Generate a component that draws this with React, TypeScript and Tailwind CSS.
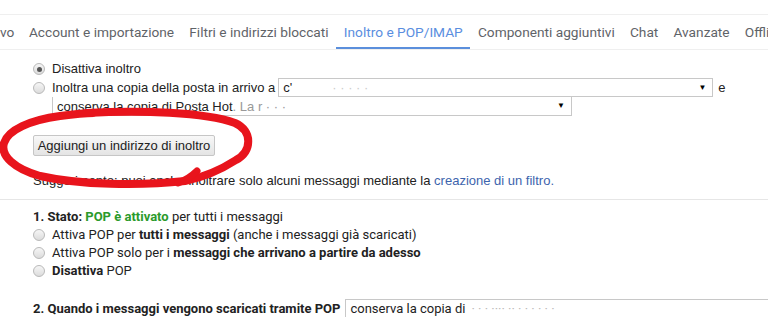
import React from 'react';

const tabs = [
  'vo',
  'Account e importazione',
  'Filtri e indirizzi bloccati',
  'Inoltro e POP/IMAP',
  'Componenti aggiuntivi',
  'Chat',
  'Avanzate',
  'Offline',
];

function Radio({ checked = false }: { checked?: boolean }) {
  return (
    <span className="mr-[7px] flex h-[12px] w-[12px] shrink-0 items-center justify-center rounded-full border border-[#b9b9b9] bg-gradient-to-b from-[#f6f6f6] to-[#dcdcdc]">
      {checked && <span className="h-[5px] w-[5px] rounded-full bg-[#555]" />}
    </span>
  );
}

function Select({ className, children }: { className: string; children?: React.ReactNode }) {
  return (
    <div className={`flex h-[19px] items-center border border-[#c8c8c8] bg-white pl-[4px] pr-[6px] ${className}`}>
      <span className="flex-1 overflow-hidden whitespace-nowrap text-[13px] leading-none text-[#222]">{children}</span>
      <span className="text-[8px] leading-none text-black">▼</span>
    </div>
  );
}

export default function App() {
  return (
    <div className="relative h-[317px] w-[768px] overflow-hidden bg-white font-['Liberation_Sans',Arial,sans-serif] text-[13px] text-[#222]">
      <div className="h-[14px]" />
      {/* tab bar */}
      <div className="flex h-[36px] items-stretch overflow-hidden whitespace-nowrap border-y border-[#efefef] font-['Roboto',sans-serif] text-[13.7px] text-[#5f6368]">
        {tabs.map((t, i) => (
          <div
            key={t}
            className={`flex shrink-0 items-center ${i === 0 ? 'pr-[7px]' : 'px-[7.6px]'} ${
              t === 'Inoltro e POP/IMAP' ? 'border-b-2 border-[#5b8fdc] pt-[2px] text-[#5a8ee0]' : ''
            }`}
          >
            {t}
          </div>
        ))}
      </div>

      {/* forwarding */}
      <div className="pl-[33px]">
        <div className="mt-[10px] flex h-[18px] items-center">
          <Radio checked />
          <span>Disattiva inoltro</span>
        </div>
        <div className="flex h-[19px] items-center">
          <Radio />
          <span className="mr-[3px]">Inoltra una copia della posta in arrivo a</span>
          <Select className="w-[435px]">
            c'<span className="ml-[40px] text-[#ccc]">· · ·  ·   ·</span>
          </Select>
          <span className="ml-[5px]">e</span>
        </div>
        <div className="pl-[19px]">
          <Select className="w-[520px] border-t-0">
            conserva la copia di Posta Hot<span className="text-[#999]">. La r · · ·</span>
          </Select>
        </div>
        <button className="mt-[19px] flex h-[21px] w-[182px] items-center justify-center rounded-[2px] border border-[#c6c6c6] bg-gradient-to-b from-[#f8f8f8] to-[#e4e4e4] text-[13px] text-[#222]">
          Aggiungi un indirizzo di inoltro
        </button>
        <div className="mt-[17px] h-[16px] leading-[16px]">
          Suggerimento: puoi anche inoltrare solo alcuni messaggi mediante la{' '}
          <span className="text-[#3d64ad]">creazione di un filtro.</span>
        </div>
      </div>

      <div className="mt-[10px] border-t border-[#e6e6e6]" />

      {/* POP */}
      <div className="pl-[33px] pt-[8px] font-['Roboto',sans-serif]">
        <div className="flex h-[18px] items-center">
          <b>1. Stato:&nbsp;</b>
          <b className="text-[#2b9a2b]">POP è attivato</b>
          <span>&nbsp;per tutti i messaggi</span>
        </div>
        <div className="flex h-[18px] items-center">
          <Radio />
          <span>
            Attiva POP per <b>tutti i messaggi</b> (anche i messaggi già scaricati)
          </span>
        </div>
        <div className="flex h-[18px] items-center">
          <Radio />
          <span>
            Attiva POP solo per i <b>messaggi che arrivano a partire da adesso</b>
          </span>
        </div>
        <div className="flex h-[18px] items-center">
          <Radio />
          <span>
            <b>Disattiva</b> POP
          </span>
        </div>
        <div className="mt-[19px] flex h-[20px] items-center">
          <b className="mr-[5px]">2. Quando i messaggi vengono scaricati tramite POP</b>
          <div className="flex h-[20px] flex-1 items-center border border-r-0 border-[#c8c8c8] pl-[4px]">
            conserva la copia di<span className="ml-[6px] text-[#bbb]">·  · ·   ···· ·· ·       ·    · ·  ·   ·</span>
          </div>
        </div>
      </div>

      {/* red hand-drawn ellipse */}
      <svg className="pointer-events-none absolute left-0 top-0" width="768" height="317" viewBox="0 0 768 317">
        <path
          d="M 86 113 C 140 110, 205 112, 235 123 C 253 131, 252 151, 236 160 C 222 169, 205 177, 185 181 C 140 186, 80 185, 40 176 C 15 169, 0 156, 4 143 C 8 130, 30 120, 60 116 C 75 114, 85 113, 94 113"
          fill="none"
          stroke="#e8141c"
          strokeWidth="8"
          strokeLinecap="round"
        />
        <path d="M 178 183 C 186 180, 192 176, 197 171" fill="none" stroke="#e8141c" strokeWidth="7" strokeLinecap="round" />
      </svg>
    </div>
  );
}
